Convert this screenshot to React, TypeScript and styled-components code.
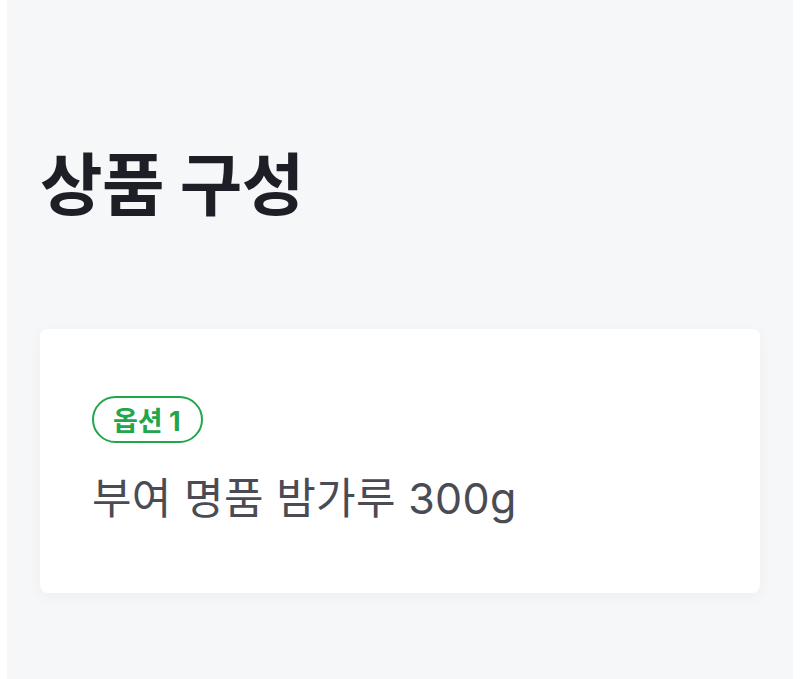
import React from "react";
import styled, { createGlobalStyle } from "styled-components";

const GlobalStyle = createGlobalStyle`
  html, body {
    margin: 0;
    padding: 0;
    background: #ffffff;
  }
  body {
    font-family: Inter, "Noto Sans CJK KR", "Noto Sans", sans-serif;
  }
`;

const items = [{ option: "옵션 1", name: "부여 명품 밤가루 300g" }];

function App() {
  return (
    <>
      <GlobalStyle />
      <Page>
        {/* 섹션 제목 */}
        <Title>상품 구성</Title>
        {items.map((item) => (
          <Card key={item.option}>
            <OptionBadge>{item.option}</OptionBadge>
            <ProductName>{item.name}</ProductName>
          </Card>
        ))}
      </Page>
    </>
  );
}

export default App;

const Page = styled.div`
  margin: 0 7px;
  min-height: 679px;
  box-sizing: border-box;
  padding: 145px 33px 40px;
  background: #f6f7f9;
`;

const Title = styled.h1`
  margin: 0 0 102px;
  font-size: 68px;
  line-height: 1.2;
  font-weight: 700;
  letter-spacing: -0.5px;
  color: #1e1f26;
`;

const Card = styled.div`
  display: flex;
  flex-direction: column;
  align-items: flex-start;
  gap: 28px;
  height: 264px;
  box-sizing: border-box;
  padding: 67px 52px 0;
  background: #ffffff;
  border-radius: 8px;
  box-shadow: 0 4px 16px rgba(20, 24, 40, 0.04);
`;

const OptionBadge = styled.span`
  display: inline-flex;
  align-items: center;
  justify-content: center;
  height: 47px;
  box-sizing: border-box;
  padding: 0 20px 0 19px;
  border: 2px solid #22a64c;
  border-radius: 24px;
  font-size: 27px;
  font-weight: 700;
  color: #22a64c;
`;

const ProductName = styled.div`
  font-size: 43px;
  line-height: 1.3;
  font-weight: 400;
  letter-spacing: 0.3px;
  color: #4a4b55;
`;
